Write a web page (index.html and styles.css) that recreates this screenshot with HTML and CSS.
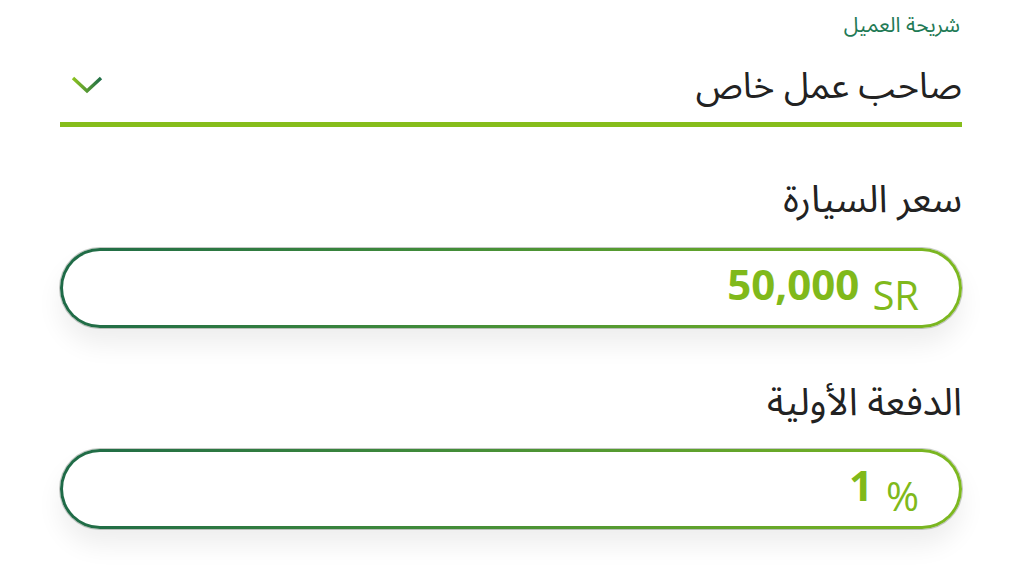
FILE: index.html
```html
<!DOCTYPE html>
<html lang="ar" dir="rtl">
<head>
<meta charset="utf-8">
<link rel="stylesheet" href="styles.css">
</head>
<body>
<div class="form">
  <div class="select-field">
    <div class="select-label">شريحة العميل</div>
    <div class="select-row">
      <span class="select-value">صاحب عمل خاص</span>
      <svg class="chevron" width="36" height="22" viewBox="0 0 36 22">
        <defs>
          <linearGradient id="cg" x1="0" y1="0" x2="1" y2="0">
            <stop offset="0" stop-color="#8cc21f"/>
            <stop offset="1" stop-color="#1f6e48"/>
          </linearGradient>
        </defs>
        <polyline points="3,4 17,17 31,4" fill="none" stroke="url(#cg)" stroke-width="3.4"/>
      </svg>
    </div>
    <div class="select-line"></div>
  </div>

  <div class="field">
    <div class="field-label">سعر السيارة</div>
    <div class="pill" dir="ltr">
      <span class="num">50,000</span><span class="unit">SR</span>
    </div>
  </div>

  <div class="field">
    <div class="field-label">الدفعة الأولية</div>
    <div class="pill" dir="ltr">
      <span class="num">1</span><span class="unit">%</span>
    </div>
  </div>
</div>
</body>
</html>
```

FILE: styles.css
```css
html, body {
  margin: 0;
  padding: 0;
  background: #ffffff;
}
body {
  font-family: "Noto Sans Arabic", "DejaVu Sans", "Noto Sans", sans-serif;
  color: #222222;
}
.form {
  padding: 10px 62px 44px 60px;
  display: flex;
  flex-direction: column;
}
.select-label {
  font-size: 21px;
  line-height: 30px;
  color: #1f7a55;
  padding-right: 2px;
}
.select-row {
  display: flex;
  justify-content: space-between;
  align-items: center;
  height: 64px;
  margin-top: 15px;
}
.select-value {
  font-size: 36px;
  line-height: 50px;
  color: #222;
}
.chevron {
  margin-left: 10px;
  margin-top: -4px;
}
.select-line {
  height: 5px;
  background: #86bd1b;
  margin-top: 3px;
}
.field {
  display: flex;
  flex-direction: column;
}
.field-label {
  font-size: 38px;
  line-height: 50px;
  margin-top: 48px;
  margin-bottom: 23px;
  color: #222;
}
.field + .field .field-label {
  margin-top: 50px;
  margin-bottom: 21px;
}
.pill {
  height: 74px;
  border: 3px solid transparent;
  border-radius: 40px;
  background:
    linear-gradient(#fff, #fff) padding-box,
    linear-gradient(to right, #1e6a47 0%, #3f8a3a 40%, #7db81f 100%) border-box;
  box-shadow: 0 0 0 1px rgba(90, 100, 90, 0.35), 0 16px 26px rgba(0, 0, 0, 0.07);
  display: flex;
  justify-content: flex-end;
  align-items: center;
  padding-right: 40px;
  color: #80b91b;
}
.num {
  font-family: "Open Sans", "Noto Sans", sans-serif;
  font-weight: 700;
  font-size: 42px;
  line-height: 1;
  margin-top: -8px;
}
.unit {
  font-family: "Open Sans", "Noto Sans", sans-serif;
  font-size: 40px;
  line-height: 1;
  margin-left: 13px;
  margin-top: 14px;
}
```
